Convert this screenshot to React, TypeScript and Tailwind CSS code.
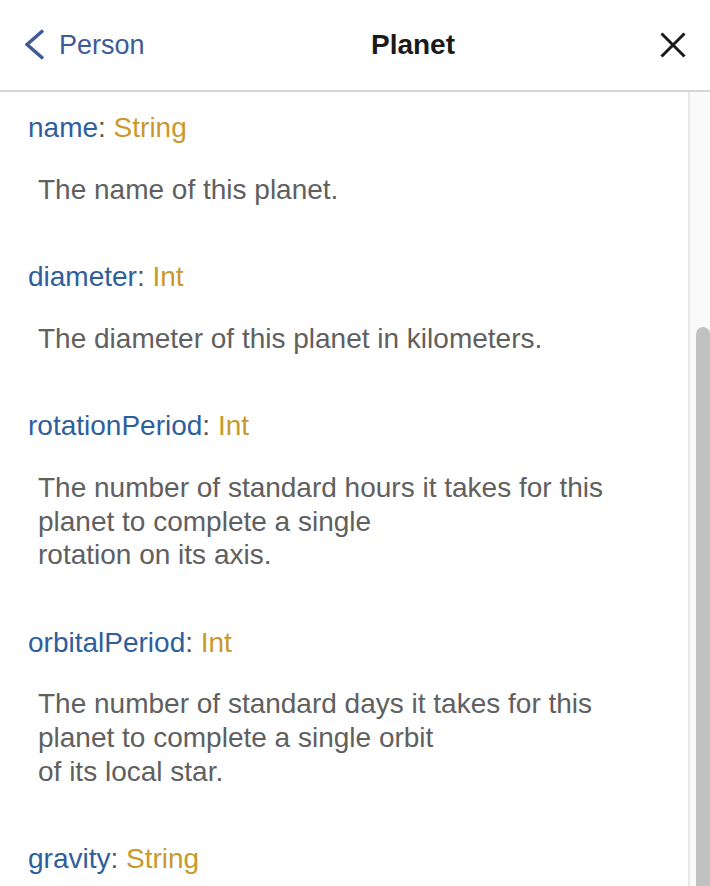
import React from 'react';

interface Field {
    name: string;
    type: string;
    description?: string;
}

const fields: Field[] = [
    { name: 'name', type: 'String', description: 'The name of this planet.' },
    { name: 'diameter', type: 'Int', description: 'The diameter of this planet in kilometers.' },
    {
        name: 'rotationPeriod',
        type: 'Int',
        description: 'The number of standard hours it takes for this\nplanet to complete a single\nrotation on its axis.',
    },
    {
        name: 'orbitalPeriod',
        type: 'Int',
        description: 'The number of standard days it takes for this\nplanet to complete a single orbit\nof its local star.',
    },
    // description sits below the fold, left out
    { name: 'gravity', type: 'String' },
];

function BackIcon() {
    return (
        <svg width="20" height="32" viewBox="0 0 20 32" fill="none">
            <polyline points="18,1.5 2,15.5 18,29.5" stroke="#3d5a99" strokeWidth="3.5" strokeLinecap="butt" strokeLinejoin="miter" />
        </svg>
    );
}

function CloseIcon() {
    return (
        <svg width="26" height="26" viewBox="0 0 26 26" fill="none">
            <path d="M1.5 1.5 L24.5 24.5 M24.5 1.5 L1.5 24.5" stroke="#1b1b1b" strokeWidth="3" />
        </svg>
    );
}

function FieldRow({ field }: { field: Field }) {
    return (
        <div className="mb-[54px]">
            <div className="text-[28px] leading-[1.2]">
                <span className="text-[#2f5e9c]">{field.name}</span>
                <span className="text-[#555555]">: </span>
                <span className="text-[#c8992c]">{field.type}</span>
            </div>
            {field.description && (
                <p className="mt-[28px] ml-[10px] text-[28px] leading-[1.2] text-[#606060] whitespace-pre-line">
                    {field.description}
                </p>
            )}
        </div>
    );
}

export default function App() {
    return (
        <div className="w-[710px] h-[886px] flex flex-col overflow-hidden bg-white antialiased font-['Liberation_Sans',Arial,sans-serif]">
            <header className="h-[92px] shrink-0 flex items-center border-b-2 border-[#d6d6d6]">
                <div className="w-[166px] pl-[25px] flex items-center gap-[14px] text-[#3d5a99]">
                    <BackIcon />
                    <span className="text-[27px] leading-none">Person</span>
                </div>
                <h1 className="flex-1 text-center text-[28px] font-bold text-[#1a1a1a] leading-none">Planet</h1>
                <div className="w-[50px] flex items-center">
                    <CloseIcon />
                </div>
            </header>
            <div className="flex-1 flex min-h-0">
                <div className="flex-1 overflow-hidden pl-[28px] pt-[19px] pr-[20px]">
                    {fields.map((f) => (
                        <FieldRow key={f.name} field={f} />
                    ))}
                </div>
                <div className="w-[22px] shrink-0 border-l-2 border-[#e8e8e8] bg-[#fafafa] pt-[235px] pl-[6px]">
                    <div className="h-full bg-[#c1c1c1] rounded-t-[7px]" />
                </div>
            </div>
        </div>
    );
}
